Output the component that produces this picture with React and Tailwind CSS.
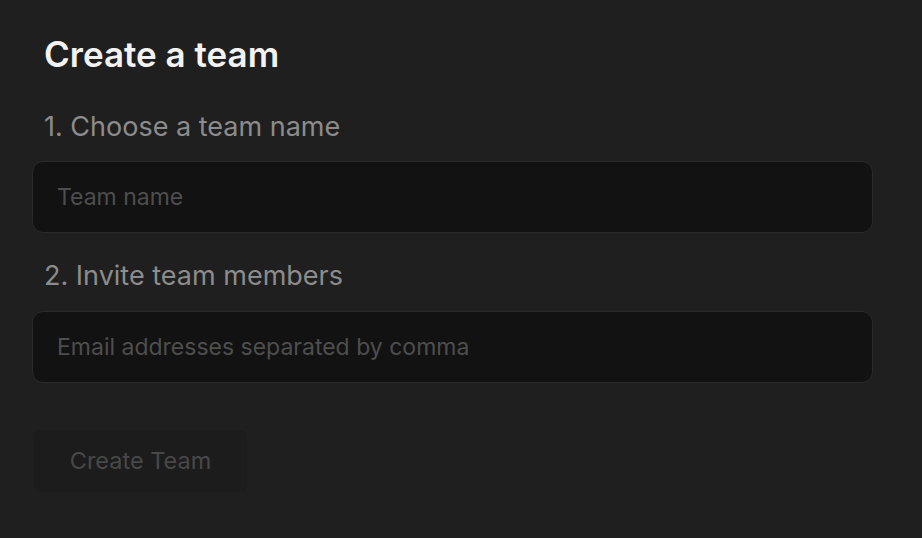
import React from 'react';

const App = () => {
  return (
    <div
      className="min-h-[538px] w-full bg-[#1f1f1f] px-[32px] pt-[32px]"
      style={{ fontFamily: 'Inter, "Noto Sans", sans-serif' }}
    >
      <div className="w-[841px]">
        <h1 className="pl-[12px] text-[35px] font-semibold leading-[44px] text-[#f2f2f2]">Create a team</h1>

        <div className="mt-[34px] pl-[12px] text-[27px] leading-[34px] text-[#8c8c8c]">1. Choose a team name</div>
        <input
          type="text"
          placeholder="Team name"
          className="mt-[17px] block h-[72px] w-full rounded-[11px] border border-[#2a2a2a] bg-[#121212] px-[24px] text-[23px] text-[#d0d0d0] placeholder:text-[#4e4e4e] outline-none"
        />

        <div className="mt-[26px] pl-[12px] text-[27px] leading-[34px] text-[#8c8c8c]">2. Invite team members</div>
        <input
          type="text"
          placeholder="Email addresses separated by comma"
          className="mt-[18px] block h-[72px] w-full rounded-[11px] border border-[#2a2a2a] bg-[#121212] px-[24px] text-[23px] text-[#d0d0d0] placeholder:text-[#4e4e4e] outline-none"
        />

        <button
          disabled
          className="ml-[2px] mt-[47px] flex h-[62px] w-[213px] items-center justify-center rounded-[6px] bg-[#1c1c1c] text-[23.5px] text-[#484848]"
        >
          Create Team
        </button>
      </div>
    </div>
  );
};

export default App;
